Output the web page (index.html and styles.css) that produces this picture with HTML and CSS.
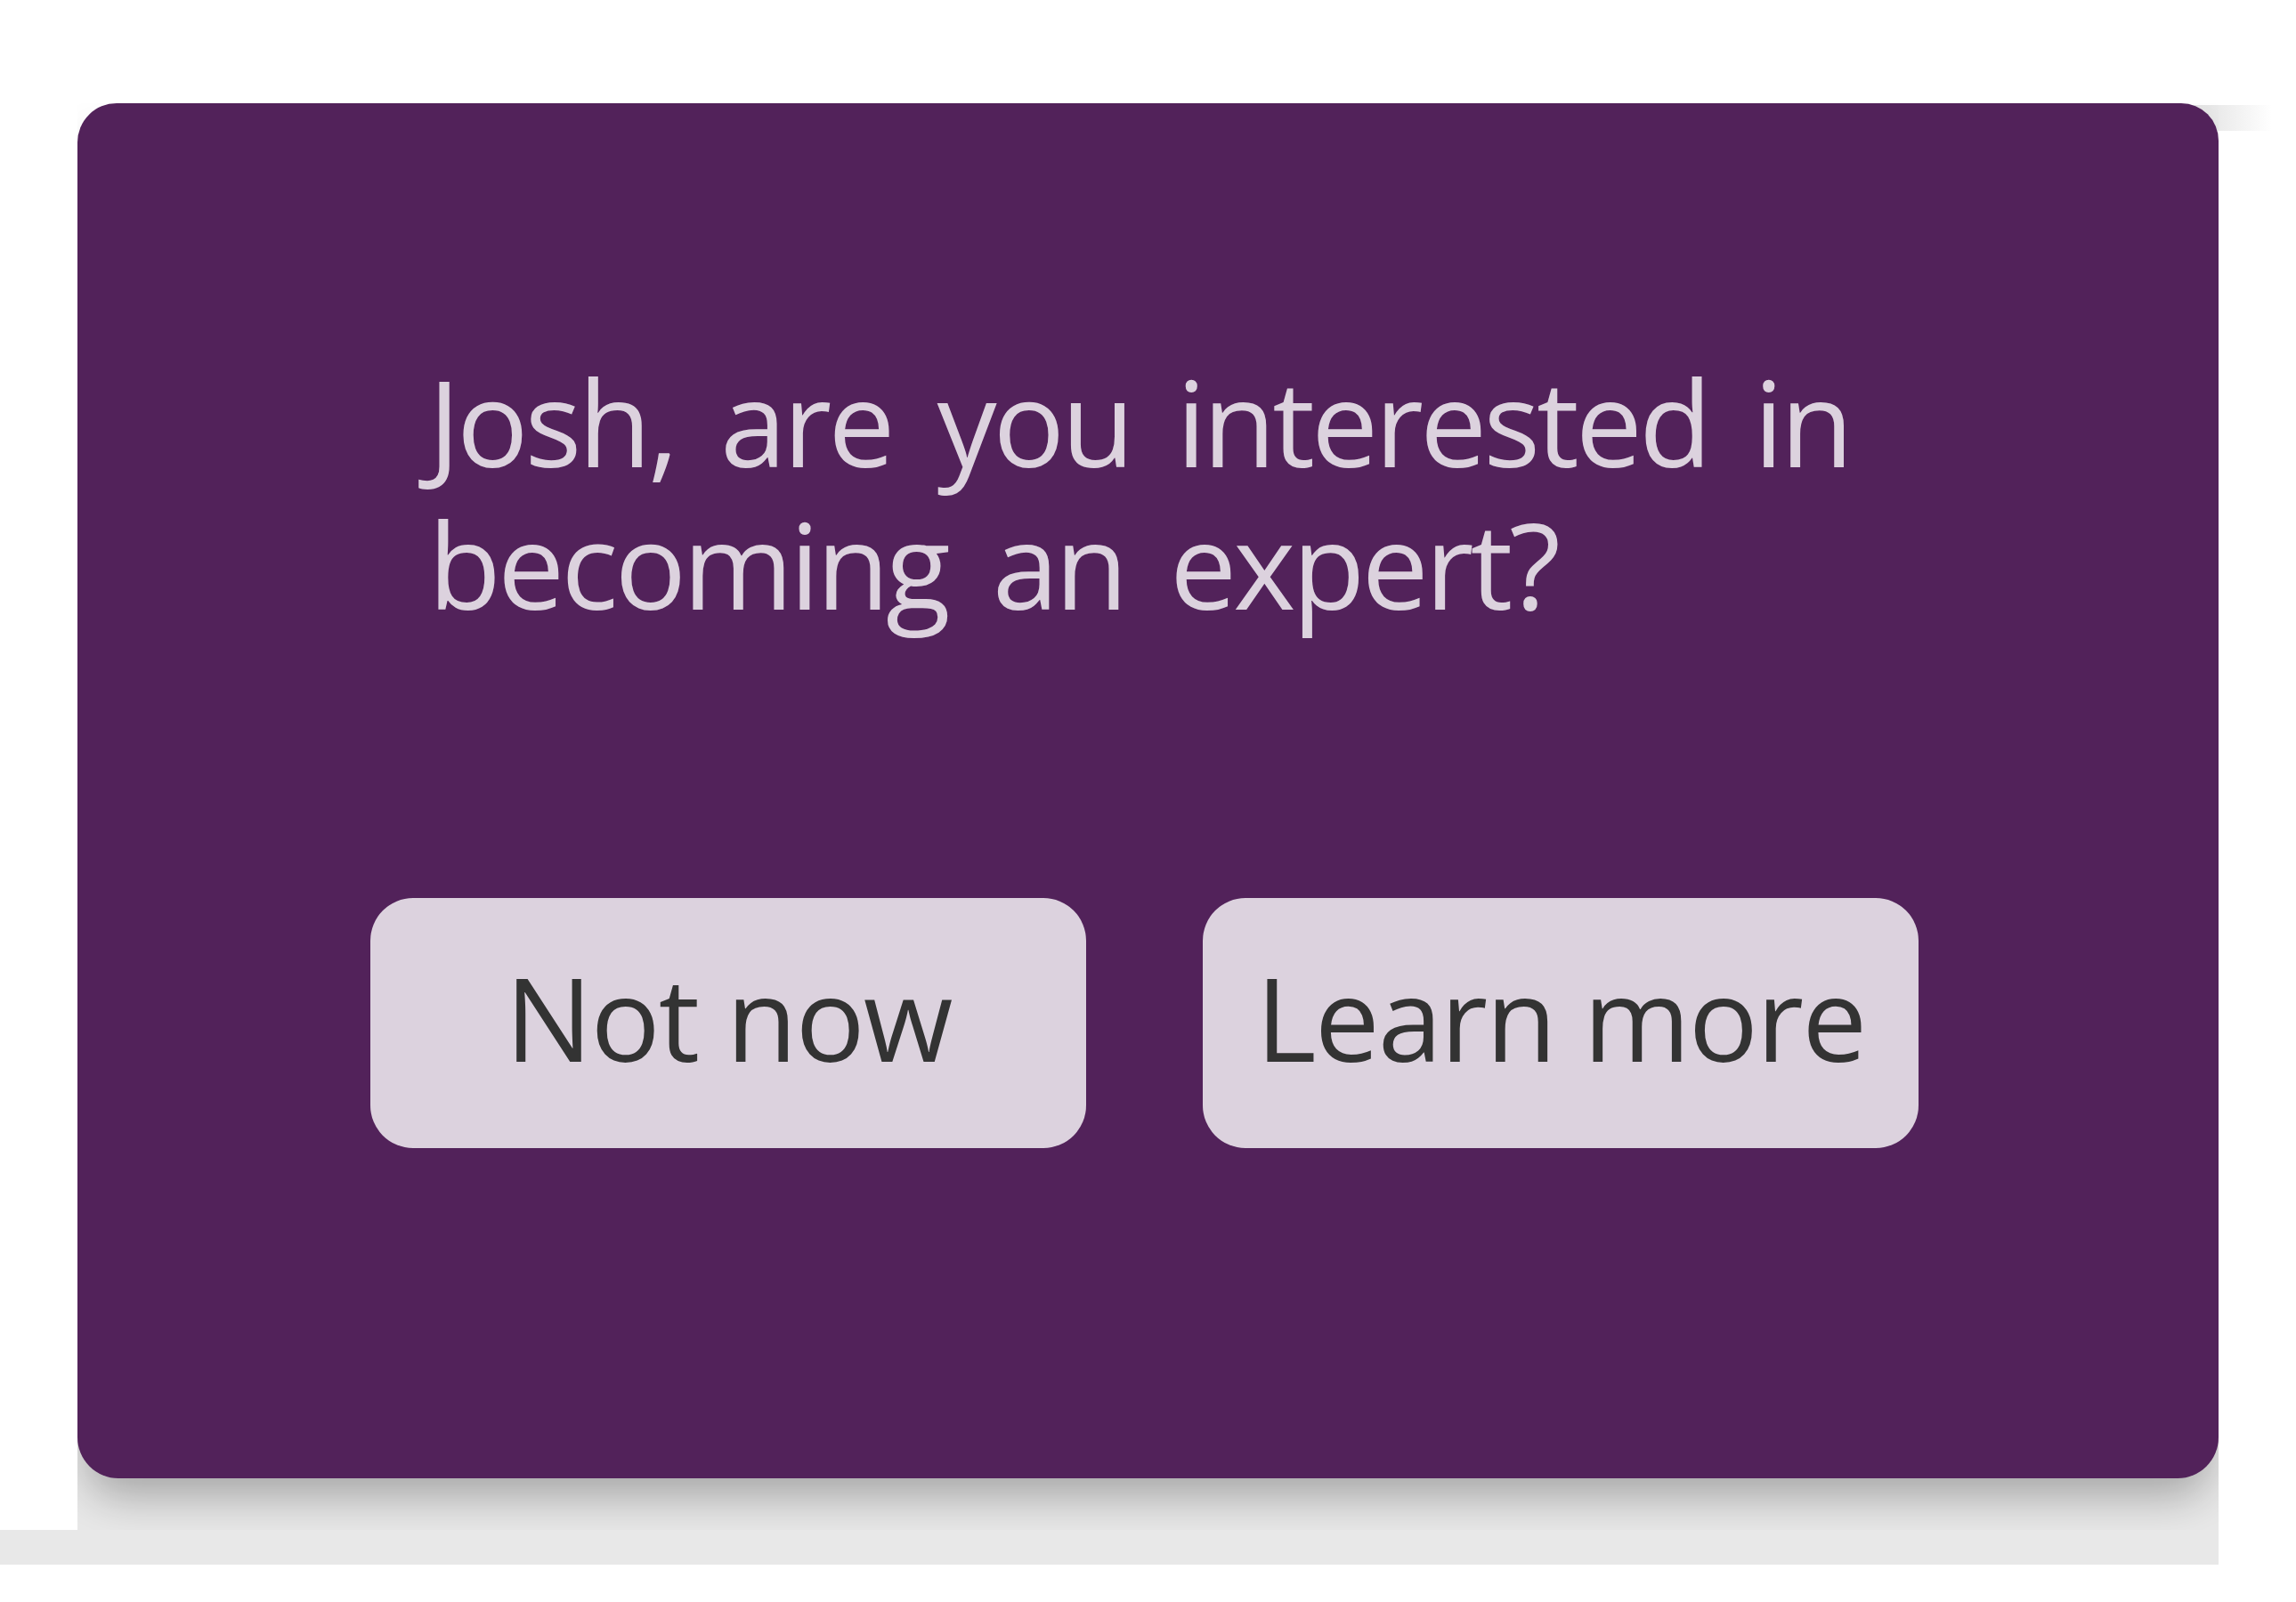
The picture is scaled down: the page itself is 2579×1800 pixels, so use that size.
FILE: index.html
```html
<!DOCTYPE html>
<html lang="en">
<head>
<meta charset="utf-8">
<title>Become an expert</title>
<link rel="stylesheet" href="styles.css">
</head>
<body>
<div class="stage">
  <div class="shadow-tab"></div>
  <div class="clip">
    <section class="card">
      <h1 class="title">Josh, are you interested in<br>becoming an expert?</h1>
      <div class="actions">
        <button class="btn" type="button">Not now</button>
        <button class="btn" type="button">Learn more</button>
      </div>
    </section>
  </div>
  <div class="floor"></div>
</div>
</body>
</html>
```
FILE: styles.css
```css
html, body {
  margin: 0;
  padding: 0;
  background: #ffffff;
}

.stage {
  position: relative;
  padding-top: 116px;
}

.shadow-tab {
  position: absolute;
  left: 2440px;
  top: 118px;
  width: 112px;
  height: 29px;
  background: linear-gradient(to right, #e2e2e2 0, #e6e6e6 35%, rgba(255,255,255,0) 100%);
  z-index: 0;
}

.clip {
  position: relative;
  z-index: 1;
  margin-left: 87px;
  width: 2405px;
  overflow: hidden;
  padding-bottom: 58px;
  background: linear-gradient(to bottom, rgba(255,255,255,0) 0, rgba(255,255,255,0) 1400px, #e8e8e8 1400px);
}

.card {
  box-sizing: border-box;
  height: 1545px;
  background: #52225a;
  border-radius: 44px 42px 46px 46px;
  box-shadow: 0 30px 50px -10px rgba(0, 0, 0, 0.29);
  padding: 277px 0 0 394px;
  display: flex;
  flex-direction: column;
  font-family: "Open Sans", "Noto Sans", sans-serif;
}

.title {
  margin: 0;
  font-size: 134px;
  font-weight: 400;
  line-height: 160px;
  letter-spacing: -4px;
  word-spacing: 20px;
  color: #dcd2de;
}

.actions {
  display: flex;
  gap: 131px;
  margin-top: 296px;
  margin-left: -65px;
}

.btn {
  box-sizing: border-box;
  width: 804px;
  height: 281px;
  padding: 54px 0 67px;
  border: 0;
  border-radius: 48px;
  background: #dcd2de;
  color: #333333;
  font-family: "Open Sans", "Noto Sans", sans-serif;
  font-size: 130px;
  font-weight: 400;
  line-height: 160px;
  letter-spacing: -2px;
  text-align: center;
}

.floor {
  width: 2492px;
  height: 39px;
  background: #e8e8e8;
}
```
